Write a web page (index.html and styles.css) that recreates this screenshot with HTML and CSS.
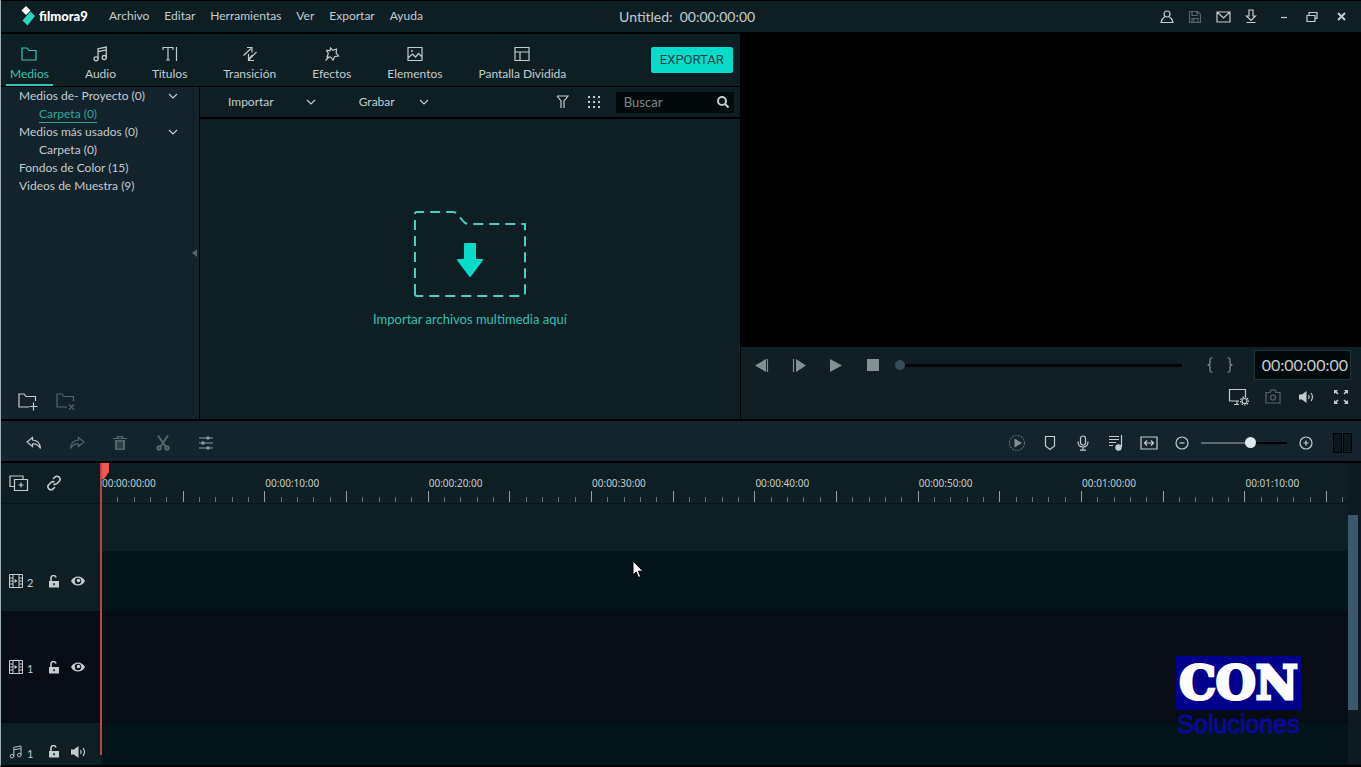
FILE: index.html
```
<!DOCTYPE html>
<html lang="es">
<head>
  <meta charset="UTF-8">
  <meta name="viewport" content="width=device-width, initial-scale=1.0">
  <title>Filmora9</title>
  <link rel="stylesheet" href="styles.css">
</head>
<body>

  <svg class="sprite" aria-hidden="true">
    <symbol id="chevron" viewBox="0 0 10 6"><path d="M1 1l4 4 4-4"/></symbol>
    <symbol id="film" viewBox="0 0 14 14"><path d="M.5.5h13v13H.5zM4 .5v13M10 .5v13M.5 4H4M.5 7H4M.5 10H4M10 4h3.500M10 7h3.500M10 10h3.500"/><path class="solid" d="M5.500 5l3 2-3 2z"/></symbol>
    <symbol id="lock" viewBox="0 0 12 13"><path stroke-width="1.600" d="M3 6V3.500A2.500 2.500 0 0 1 8 2.500"/><path class="solid" fill-rule="evenodd" d="M1 6h10v6.500H1zM5.200 8.200v2h1.600v-2z"/></symbol>
    <symbol id="eye" viewBox="0 0 14 10"><path class="solid" fill-rule="evenodd" d="M0 5C3-1 11-1 14 5 11 11 3 11 0 5zm7-3.200a3.200 3.200 0 1 0 0 6.400 3.200 3.200 0 0 0 0-6.400z"/><circle class="solid" cx="7.500" cy="4.500" r="1.800"/></symbol>
    <symbol id="speaker" viewBox="0 0 16 12"><path class="solid" d="M0 3.500h3L7.500 0v12L3 8.500H0z"/><path d="M9.500 4q1.500 2 0 4M12 2q3 4 0 8"/></symbol>
    <symbol id="note" viewBox="0 0 14 15"><circle cx="2.800" cy="12" r="1.900"/><circle cx="10.500" cy="10.800" r="1.900"/><path d="M4.700 12V2.500L12.400 1v9.800M4.700 5.200l7.700-1.500"/></symbol>
  </svg>

  <div class="window">

    <header class="titlebar">
      <div class="brand">
        <svg class="brand-mark" viewBox="0 0 16 20"><path fill="#fff" d="M5 0l4.500 4.500L5 9 .5 4.500z"/><path fill="#2ad6c0" d="M9.500 5.500L14 10l-7.500 9.500-5-5L5 10.500z"/></svg>
        <span class="brand-name">filmora9</span>
      </div>
      <nav class="menu">
        <a href="#">Archivo</a>
        <a href="#">Editar</a>
        <a href="#">Herramientas</a>
        <a href="#">Ver</a>
        <a href="#">Exportar</a>
        <a href="#">Ayuda</a>
      </nav>
      <div class="project">Untitled:&nbsp; 00:00:00:00</div>
      <div class="window-buttons">
        <button aria-label="Cuenta"><svg width="14" height="14" viewBox="0 0 14 14"><circle cx="7" cy="4" r="3"/><path d="M5 6.500C2.500 8 1.500 10 1 12.500h12c-.5-2.500-1.500-4.500-4-6"/></svg></button>
        <button class="dim" aria-label="Guardar"><svg width="14" height="14" viewBox="0 0 14 14"><path d="M1.500 1.500h8l3 3v8h-11zM4 1.500v4h5v-4M4 12.500v-4h6v4M6 8.500v4"/></svg></button>
        <button aria-label="Mensajes"><svg width="15" height="12" viewBox="0 0 15 12"><path d="M1 1h13v10H1zM1 1l6.500 6L14 1"/></svg></button>
        <button aria-label="Descargas"><svg width="12" height="15" viewBox="0 0 12 15"><path d="M4 1h4v6h2.500L6 11.500 1.500 7H4zM1.500 13.500h9"/></svg></button>
        <button class="minimize" aria-label="Minimizar"><svg width="8" height="8" viewBox="0 0 8 8"><path d="M1 4.500h6"/></svg></button>
        <button aria-label="Restaurar"><svg width="12" height="10" viewBox="0 0 12 10"><path d="M1 3.500h8v6H1zM3 3.500v-3h8v6H9"/></svg></button>
        <button class="close" aria-label="Cerrar"><svg width="9" height="9" viewBox="0 0 9 9"><path d="M1 1l7 7M8 1L1 8"/></svg></button>
      </div>
    </header>

    <main class="workspace">
      <section class="library">
        <div class="tabs">
          <button class="tab active"><svg width="16" height="16" viewBox="0 0 16 16"><path d="M1 14V2h5l2 2.500h7V14z"/></svg>Medios</button>
          <button class="tab"><svg width="15" height="16" viewBox="0 0 14 15"><use href="#note"/></svg>Audio</button>
          <button class="tab"><svg width="16" height="16" viewBox="0 0 16 16"><path d="M1 4V1.500h10V4M6 1.500V14M4 14h4M14.500 1v14"/></svg>Títulos</button>
          <button class="tab"><svg width="16" height="16" viewBox="0 0 16 16"><path d="M2 9l7-6.500M5 1.500h5v5M4.500 7L1.500 9.500M14.500 6L7 13.500M6.500 8v6.500H12M10.500 9L7 13"/></svg>Transición</button>
          <button class="tab"><svg width="16" height="16" viewBox="0 0 16 16"><path d="M6.500 2l2.300 2.300L12.500 3l-.3 4 2.300 3-3.800.5L9 14l-2.300-3-3.700.2 1.300-3.700L2.700 4.500l3.500.1zM5 11l-3.500 3.500"/></svg>Efectos</button>
          <button class="tab"><svg width="16" height="16" viewBox="0 0 16 16"><path d="M1 1.500h14v13H1zM1.500 11.500L5.500 8l3 3 3-3.500 3 3"/><circle class="solid" cx="5" cy="5" r="1"/></svg>Elementos</button>
          <button class="tab"><svg width="16" height="16" viewBox="0 0 16 16"><path d="M1 1.500h14v13H1zM1 6h14M6 6v8.500"/></svg>Pantalla Dividida</button>
          <button class="export">EXPORTAR</button>
        </div>

        <div class="library-body">
          <aside class="sidebar">
            <ul class="tree">
              <li><a href="#">Medios de- Proyecto (0)</a><svg class="chevron"><use href="#chevron"/></svg></li>
              <li class="child"><a class="selected" href="#">Carpeta (0)</a></li>
              <li><a href="#">Medios más usados (0)</a><svg class="chevron"><use href="#chevron"/></svg></li>
              <li class="child"><a href="#">Carpeta (0)</a></li>
              <li><a href="#">Fondos de Color (15)</a></li>
              <li><a href="#">Videos de Muestra (9)</a></li>
            </ul>
            <button class="collapse" aria-label="Contraer panel"><svg width="5" height="8" viewBox="0 0 5 8"><path class="solid" d="M5 0v8L0 4z"/></svg></button>
            <div class="folder-actions">
              <button aria-label="Nueva carpeta"><svg width="20" height="18" viewBox="0 0 20 18"><path d="M11 14H1V1h5l2 2.500h9.500V8M15.500 9.500v8M11.500 13.500h8"/></svg></button>
              <button class="dim" aria-label="Eliminar carpeta"><svg width="20" height="18" viewBox="0 0 20 18"><path d="M11 14H1V1h5l2 2.500h9.500V8M13 11.500l5 5M18 11.500l-5 5"/></svg></button>
            </div>
          </aside>

          <div class="media">
            <div class="media-bar">
              <button class="dropdown import">Importar<svg class="chevron"><use href="#chevron"/></svg></button>
              <button class="dropdown record">Grabar<svg class="chevron"><use href="#chevron"/></svg></button>
              <button class="filter" aria-label="Filtrar"><svg width="13" height="14" viewBox="0 0 13 14"><path d="M1 1h11L8 6v7M1 1l4 5v7"/></svg></button>
              <button class="view" aria-label="Vista"><svg width="14" height="14" viewBox="0 0 14 14"><path class="dots" d="M1 2h12M1 7h12M1 12h12"/></svg></button>
              <label class="search">
                <input type="text" placeholder="Buscar" aria-label="Buscar">
                <svg width="12" height="12" viewBox="0 0 12 12"><circle cx="5" cy="5" r="4"/><path d="M8 8l3.500 3.500"/></svg>
              </label>
            </div>
            <button class="dropzone">
              <svg width="114" height="88" viewBox="0 0 114 88">
                <path class="dashed" d="M2 84V4q0-2 2-2h36q4 0 6 4l4 5q2 3 6 3h56v68q0 4-3 4H4q-2 0-2-2z"/>
                <path class="arrow" d="M52 34h10v16h7L57 66 45 50h7z"/>
              </svg>
              Importar archivos multimedia aquí
            </button>
          </div>
        </div>
      </section>

      <section class="player">
        <div class="preview"></div>
        <div class="player-controls">
          <div class="transport">
            <button aria-label="Cuadro anterior"><svg width="14" height="13" viewBox="0 0 14 13"><path class="solid" d="M11 0v13L0 6.500z"/><path d="M12.500 0v13"/></svg></button>
            <button aria-label="Cuadro siguiente"><svg width="14" height="13" viewBox="0 0 14 13"><path class="solid" d="M4 0v13l10-6.500z"/><path d="M1.500 0v13"/></svg></button>
            <button aria-label="Reproducir"><svg width="12" height="13" viewBox="0 0 12 13"><path class="solid" d="M0 0v13l12-6.500z"/></svg></button>
            <button aria-label="Detener"><svg width="12" height="12" viewBox="0 0 12 12"><path class="solid" d="M0 0h12v12H0z"/></svg></button>
            <input class="seek" type="range" min="0" max="100" value="0" aria-label="Posición">
            <button class="mark" aria-label="Marcar entrada"><svg width="8" height="16" viewBox="0 0 8 16"><path d="M6.500 1H5Q4 1 4 3v3q0 2-2.500 2Q4 8 4 10v3q0 2 1 2h1.500"/></svg></button>
            <button class="mark" aria-label="Marcar salida"><svg width="8" height="16" viewBox="0 0 8 16"><path d="M1.500 1H3q1 0 1 2v3q0 2 2.500 2Q4 8 4 10v3q0 2-1 2H1.500"/></svg></button>
            <output class="timecode">00:00:00:00</output>
          </div>
          <div class="player-tools">
            <button aria-label="Calidad"><svg width="22" height="18" viewBox="0 0 22 18"><path d="M11 13H1.500V1.500h16V9M6 16.500h5M9 13.500v3"/><circle cx="16.500" cy="13" r="2.500"/><path stroke-dasharray="1.500 1.300" d="M16.500 9a4 4 0 1 1 0 8 4 4 0 0 1 0-8z"/></svg></button>
            <button class="dim" aria-label="Captura"><svg width="16" height="15" viewBox="0 0 16 15"><path d="M1 3.500h4l1-2.500h4l1 2.500h4V14H1z"/><circle cx="8" cy="8.500" r="2.500"/></svg></button>
            <button aria-label="Volumen"><svg width="16" height="12"><use href="#speaker"/></svg></button>
            <button aria-label="Pantalla completa"><svg width="14" height="14" viewBox="0 0 14 14"><path class="solid" d="M0 0h4L2.700 1.500 4.500 3.500l-1 1-2-1.800L0 4zM14 0v4l-1.500-1.300-2 1.800-1-1 1.800-2L10 0zM0 14v-4l1.500 1.300 2-1.800 1 1-1.800 2L4 14zM14 14h-4l1.300-1.500-1.800-2 1-1 2 1.800L14 10z"/></svg></button>
          </div>
        </div>
      </section>
    </main>

    <div class="toolbar">
      <button aria-label="Deshacer"><svg width="16" height="14" viewBox="0 0 16 14"><path d="M6.500 1.500L1 6l5.500 4.500V8q5-.5 8 4.500Q14 4.500 6.500 4z"/></svg></button>
      <button class="dim" aria-label="Rehacer"><svg width="16" height="14" viewBox="0 0 16 14"><path d="M9.500 1.500L15 6l-5.500 4.500V8q-5-.5-8 4.500Q2 4.500 9.500 4z"/></svg></button>
      <button class="dim" aria-label="Eliminar"><svg width="14" height="14" viewBox="0 0 14 14"><path d="M0 2.500h14M4.500 2V.500h5V2"/><path class="solid" d="M2 4h10v10H2z"/><path class="cut" d="M5 5.500v7M7 5.500v7M9 5.500v7"/></svg></button>
      <button class="dim" aria-label="Cortar"><svg width="14" height="16" viewBox="0 0 14 16"><path class="bold" d="M2 0.500l7.500 11M12 .5L4.500 11.500"/><circle class="bold" cx="3" cy="13" r="1.700"/><circle class="bold" cx="11" cy="13" r="1.700"/></svg></button>
      <button class="mid" aria-label="Ajustes"><svg width="14" height="14" viewBox="0 0 14 14"><path d="M0 2h14M0 7h14M0 12h14"/><circle class="solid" cx="9" cy="2" r="1.800"/><circle class="solid" cx="4" cy="7" r="1.800"/><circle class="solid" cx="9" cy="12" r="1.800"/></svg></button>

      <div class="toolbar-right">
        <button class="dim" aria-label="Renderizar"><svg width="18" height="18" viewBox="0 0 18 18"><circle cx="9" cy="9" r="7.500" stroke-dasharray="2 1"/><path class="solid play" d="M6.500 4.500v9L14 9z"/></svg></button>
        <button aria-label="Marcador"><svg width="12" height="16" viewBox="0 0 12 16"><path d="M1.500 1.500h9v9.500L6 14.500 1.500 11z"/></svg></button>
        <button aria-label="Grabar voz"><svg width="12" height="16" viewBox="0 0 12 16"><rect x="3.500" y="1" width="5" height="9" rx="2.500"/><path d="M1 6.500Q1 12 6 12t5-5.500M6 12v3M3 15.200h6"/></svg></button>
        <button aria-label="Mezclador de audio"><svg width="14" height="16" viewBox="0 0 14 16"><path d="M0 1.500h10M0 4.500h10M0 7.500h7M0 10.500h4M12.500 0v12"/><circle class="solid" cx="9.500" cy="12.500" r="3.200"/></svg></button>
        <button aria-label="Ajustar a la ventana"><svg width="18" height="14" viewBox="0 0 18 14"><path d="M1 1h16v12H1zM4.500 7h9M7 4.500L4.500 7 7 9.500M11 4.500L13.500 7 11 9.500"/></svg></button>
        <button aria-label="Alejar"><svg width="14" height="14" viewBox="0 0 14 14"><circle cx="7" cy="7" r="6"/><path d="M4.500 7h5"/></svg></button>
        <input class="zoom" type="range" min="0" max="100" value="59" aria-label="Zoom">
        <button aria-label="Acercar"><svg width="14" height="14" viewBox="0 0 14 14"><circle cx="7" cy="7" r="6"/><path d="M4.500 7h5M7 4.500v5"/></svg></button>
        <div class="meters"><span></span><span></span></div>
      </div>
    </div>

    <section class="timeline">
      <div class="tracks">
        <div class="track ruler-row">
          <div class="track-head">
            <button aria-label="Agregar pista"><svg width="20" height="17" viewBox="0 0 20 17"><path d="M5 11.500H1V1h13v3.500M5.500 4.500h13v11h-13zM12 7.500v5M9.500 10h5"/></svg></button>
            <button aria-label="Vincular"><svg width="16" height="16" viewBox="0 0 16 16"><path stroke-width="1.600" d="M7 4l2-2q2-1.500 4 0 2 2 .5 4L11 8.500q-1.500 1.500-3.500.5M9 12l-2 2q-2 1.500-4 0-2-2-.5-4L5 7.500Q6.500 6 8.500 7"/></svg></button>
          </div>
          <div class="ruler" id="ruler"></div>
        </div>
        <div class="track spacer"><div class="track-head"></div><div class="lane"></div></div>
        <div class="track video-2">
          <div class="track-head"><svg width="14" height="14"><use href="#film"/></svg><span>2</span><button aria-label="Bloquear pista 2"><svg width="12" height="13"><use href="#lock"/></svg></button><button aria-label="Ocultar pista 2"><svg width="14" height="10"><use href="#eye"/></svg></button></div>
          <div class="lane"></div>
        </div>
        <div class="track video-1">
          <div class="track-head"><svg width="14" height="14"><use href="#film"/></svg><span>1</span><button aria-label="Bloquear pista 1"><svg width="12" height="13"><use href="#lock"/></svg></button><button aria-label="Ocultar pista 1"><svg width="14" height="10"><use href="#eye"/></svg></button></div>
          <div class="lane"></div>
        </div>
        <div class="track audio-1">
          <div class="track-head"><svg width="14" height="14"><use href="#note"/></svg><span>1</span><button aria-label="Bloquear audio 1"><svg width="12" height="13"><use href="#lock"/></svg></button><button aria-label="Silenciar audio 1"><svg width="16" height="12"><use href="#speaker"/></svg></button></div>
          <div class="lane"></div>
        </div>
      </div>
      <div class="scrollbar"><div class="scroll-thumb"></div></div>
      <div class="playhead"><svg width="7" height="16" viewBox="0 0 7 16"><path d="M0 0h7v9l-5 7H0z"/></svg></div>
      <div class="watermark"><strong>CON</strong><span>Soluciones</span></div>
      <svg class="cursor" width="12" height="19" viewBox="0 0 12 19"><path d="M1 1v14l3.200-3 2.300 5.500 2.200-1-2.300-5.300H11z"/></svg>
    </section>

  </div>

  <script>
    const ruler = document.getElementById("ruler");
    const times = ["00:00", "00:10", "00:20", "00:30", "00:40", "00:50", "01:00", "01:10"];

    times.forEach(time => {
      const step = document.createElement("div");
      step.className = "step";
      step.innerHTML = `<time>00:${time}:00</time><div class="ticks">${"<i></i>".repeat(10)}</div>`;
      ruler.appendChild(step);
    });
  </script>

</body>
</html>
```

FILE: styles.css
```
* {
  box-sizing: border-box;
}

body {
  margin: 0;
  background: #000;
  color: #c3cdcf;
  font-family: Lato, "Noto Sans", sans-serif;
  font-size: 12px;
  line-height: 18px;
}

button {
  display: flex;
  align-items: center;
  justify-content: center;
  padding: 0;
  border: 0;
  background: none;
  color: inherit;
  font: inherit;
  cursor: pointer;
}

a {
  color: inherit;
  text-decoration: none;
}

svg {
  flex: none;
  fill: none;
  stroke: currentColor;
  stroke-width: 1.2;
}

.solid {
  fill: currentColor;
  stroke: none;
}

.bold {
  stroke-width: 2;
}

.dim {
  color: #56666b;
}

.mid {
  color: #8b999d;
}

.sprite {
  display: none;
}

.chevron {
  width: 10px;
  height: 6px;
}

.window {
  display: flex;
  flex-direction: column;
  min-height: 100vh;
  border-left: 1px solid #9fb0b5;
  border-bottom: 2px solid #000;
}

/* Title bar */
.titlebar {
  display: grid;
  grid-template-columns: 104px 37.8% 1fr auto;
  align-items: center;
  height: 34px;
  border-top: 1px solid #000;
  border-bottom: 2px solid #000;
  background: #0e1f23;
}

.brand {
  display: flex;
  align-items: center;
  gap: 2px;
  padding: 0 0 2px 20px;
}

.brand-mark {
  width: 16px;
  height: 20px;
  stroke: none;
}

.brand-name {
  color: #fff;
  font-size: 13px;
  font-weight: 900;
}

.menu {
  display: flex;
  gap: 15px;
  padding: 0 0 2px 4px;
}

.project {
  font-size: 14px;
}

.window-buttons {
  display: flex;
  padding-right: 6px;
}

.window-buttons button {
  width: 28px;
  height: 28px;
}

.window-buttons .minimize {
  margin-left: 5px;
}

.window-buttons .close {
  margin-left: 1px;
}

.close svg {
  stroke-width: 2;
}

/* Upper half */
.workspace {
  display: grid;
  grid-template-columns: 54.4% 1fr;
  flex: 1;
  border-bottom: 2px solid #000;
}

.library {
  display: flex;
  flex-direction: column;
  border-right: 1px solid #000;
  background: #0e1f23;
}

.tabs {
  display: flex;
  gap: 28px;
  height: 53px;
  padding: 0 7px 0 5px;
  border-bottom: 1px solid #000;
}

.tab {
  flex-direction: column;
  gap: 3px;
  padding: 10px 4px 0;
  border-bottom: 2px solid transparent;
}

.tab.active {
  border-color: #35c4b5;
  color: #35c4b5;
}

.export {
  align-self: center;
  width: 82px;
  height: 26px;
  margin-left: auto;
  border-radius: 2px;
  background: #07dccb;
  color: #0d3f42;
  font-family: Roboto, sans-serif;
  font-size: 13px;
}

.library-body {
  display: flex;
  flex: 1;
}

.sidebar {
  position: relative;
  display: flex;
  flex-direction: column;
  justify-content: space-between;
  width: 199px;
  border-right: 1px solid #000;
  background: #12232c;
}

.tree {
  margin: 0;
  padding: 0 21px 0 18px;
  list-style: none;
}

.tree li {
  display: flex;
  align-items: center;
  justify-content: space-between;
}

.tree .child {
  padding-left: 20px;
}

.selected {
  border-bottom: 1px solid;
  color: #2fa69d;
  line-height: 17px;
}

.collapse {
  position: absolute;
  top: calc(50% - 10px);
  right: 0;
  width: 10px;
  height: 20px;
  color: #56666b;
}

.folder-actions {
  display: flex;
  gap: 18px;
  padding: 0 17px 8px;
}

.media {
  display: flex;
  flex: 1;
  flex-direction: column;
}

.media-bar {
  display: flex;
  align-items: center;
  height: 32px;
  padding: 0 6px 0 28px;
  border-bottom: 2px solid #000;
}

.dropdown {
  gap: 32px;
}

.record {
  gap: 24px;
  margin-left: 43px;
}

.filter {
  margin-left: auto;
}

.view {
  margin: 0 15px 0 18px;
}

.dots {
  stroke-width: 2;
  stroke-dasharray: 2 3;
}

.search {
  display: flex;
  align-items: center;
  width: 118px;
  height: 21px;
  padding: 0 5px 0 8px;
  background: #030a0c;
}

.search input {
  flex: 1;
  min-width: 0;
  padding: 0;
  border: 0;
  outline: 0;
  background: none;
  color: inherit;
  font: inherit;
  font-size: 13px;
}

.search input::placeholder {
  color: #7d8a8d;
  opacity: 1;
}

.search svg {
  stroke-width: 2;
}

.dropzone {
  flex: 1;
  flex-direction: column;
  gap: 12px;
  color: #2fc0b2;
  font-size: 13px;
}

.dashed {
  stroke: #45cfc0;
  stroke-width: 2;
  stroke-dasharray: 10 6;
}

.arrow {
  fill: #07dccb;
  stroke: #07dccb;
  stroke-linejoin: round;
  stroke-width: 2;
}

/* Player */
.player {
  display: flex;
  flex-direction: column;
}

.preview {
  flex: 1;
}

.player-controls {
  padding: 3px 10px 6px 3px;
  background: #0f1f23;
}

.transport {
  display: flex;
  align-items: center;
  color: #839195;
}

.transport button {
  width: 37px;
  height: 28px;
}

.transport .mark {
  width: 20px;
}

input[type="range"] {
  height: 16px;
  margin: 0;
  appearance: none;
  background: none;
}

.transport .seek {
  flex: 1;
  min-width: 0;
  margin: 0 18px 0 3px;
}

.seek::-webkit-slider-runnable-track {
  height: 3px;
  background: #000;
}

.seek::-webkit-slider-thumb {
  width: 10px;
  height: 10px;
  margin-top: -4px;
  border-radius: 50%;
  appearance: none;
  background: #35505a;
}

.timecode {
  margin-left: 14px;
  padding: 5px 2px 5px 7px;
  border: 1px solid #22343a;
  background: #030a0c;
  color: #c3cdcf;
  font-size: 16px;
}

.player-tools {
  display: flex;
  justify-content: flex-end;
  margin-right: -7px;
}

.player-tools button {
  width: 34px;
  height: 33px;
}

/* Toolbar */
.toolbar {
  display: flex;
  align-items: center;
  gap: 15px;
  height: 42px;
  padding: 3px 9px 0 19px;
  border-bottom: 2px solid #000;
  background: #13242d;
}

.toolbar button {
  width: 28px;
  height: 28px;
}

.cut {
  stroke: #13242d;
}

.play {
  fill: #839195;
}

.toolbar-right {
  display: flex;
  align-items: center;
  gap: 5px;
  margin-left: auto;
}

.zoom {
  width: 86px;
}

.zoom::-webkit-slider-runnable-track {
  height: 2px;
  background: linear-gradient(90deg, #5b6b70 59%, #000 59%);
}

.zoom::-webkit-slider-thumb {
  width: 11px;
  height: 11px;
  margin-top: -5px;
  border-radius: 50%;
  appearance: none;
  background: #dfe8ea;
}

.meters {
  display: flex;
  gap: 1px;
  margin-left: 8px;
}

.meters span {
  width: 9px;
  height: 20px;
  border: 1px solid #000;
  background: #0a171b;
}

/* Timeline */
.timeline {
  position: relative;
  display: flex;
  background: #0e1f23;
}

.tracks {
  flex: 1;
  min-width: 0;
}

.track {
  display: flex;
}

.track-head {
  display: flex;
  align-items: center;
  width: 100px;
  padding-left: 8px;
}

.track-head > svg {
  stroke-width: 1;
}

.track-head span {
  width: 7px;
  margin: 4px 14px 0 4px;
  font-size: 11px;
}

.track-head button + button {
  margin-left: 11px;
}

.lane {
  flex: 1;
}

.ruler-row {
  height: 41px;
  border-bottom: 1px solid #07151a;
}

.ruler-row .track-head {
  gap: 6px;
}

.ruler {
  display: grid;
  flex: 1;
  grid-auto-columns: 13.1%;
  grid-auto-flow: column;
  min-width: 0;
  overflow: hidden;
}

.step {
  display: flex;
  flex-direction: column;
  justify-content: space-between;
  padding: 12px 0 3px;
}

.step time {
  padding-left: 1px;
  font-family: "Noto Sans", sans-serif;
  font-size: 10px;
  line-height: 16px;
  white-space: nowrap;
}

.ticks {
  display: flex;
  align-items: flex-end;
}

.ticks i {
  flex: 1;
  height: 5px;
  border-left: 1px solid #64757a;
}

.ticks i:nth-child(5n + 1) {
  height: 11px;
  border-color: #93a1a5;
}

.spacer {
  height: 47px;
}

.video-2 {
  height: 60px;
}

.video-2 .lane,
.audio-1 .lane {
  background: #03141a;
}

.video-1 {
  height: 112px;
  background: #070c15;
}

.audio-1 {
  height: 42px;
}

.audio-1 .track-head {
  padding-top: 15px;
}

.scrollbar {
  width: 13px;
  padding: 52px 3px 0 0;
  background: #0e1a20;
}

.scroll-thumb {
  height: 195px;
  background: #3d586b;
}

.playhead {
  position: absolute;
  top: 0;
  bottom: 10px;
  left: 99px;
  border-left: 2px solid #b94747;
}

.playhead svg {
  display: block;
  fill: #f2564f;
  stroke: none;
}

.watermark {
  position: absolute;
  right: 60px;
  bottom: 26px;
  width: 125px;
  color: #0a0a9c;
  text-align: center;
}

.watermark strong {
  display: block;
  background: #00008c;
  color: #fff;
  font-family: "DejaVu Serif", serif;
  font-size: 46px;
  line-height: 54px;
  -webkit-text-stroke: 3px #fff;
}

.watermark span {
  display: block;
  font-family: "Liberation Sans", sans-serif;
  font-size: 25px;
  line-height: 29px;
  -webkit-text-stroke: 1px #0a0a9c;
}

.cursor {
  position: absolute;
  top: 97px;
  left: 631px;
  fill: #fff;
  stroke: #000;
  stroke-width: 1;
}
```
